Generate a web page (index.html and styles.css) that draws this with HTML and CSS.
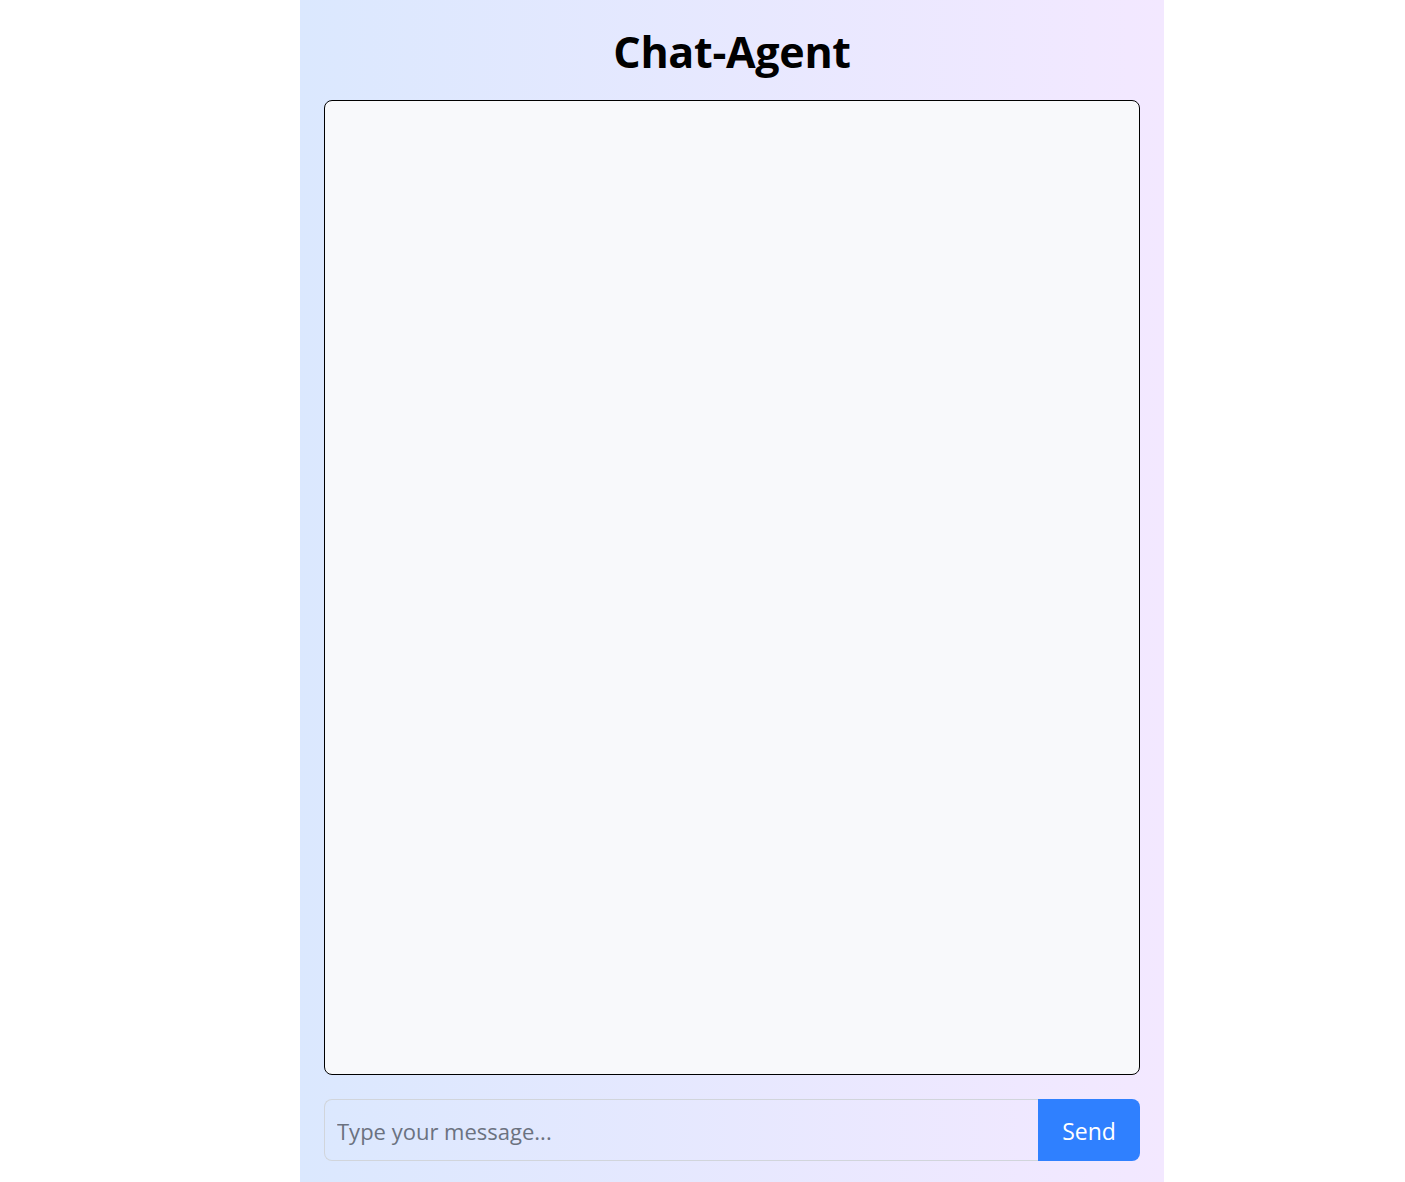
FILE: index.html
```
<!DOCTYPE html>
<html>
<head>
<meta charset="utf-8">
<link rel="stylesheet" href="styles.css">
</head>
<body>
<div class="app">
  <h1 class="title">Chat-Agent</h1>
  <div class="chat-box"></div>
  <form class="input-row">
    <input class="msg-input" type="text" placeholder="Type your message...">
    <button class="send-btn" type="button">Send</button>
  </form>
</div>
</body>
</html>
```
FILE: styles.css
```
html, body {
  margin: 0;
  padding: 0;
  background: #ffffff;
  height: 100%;
}
body {
  font-family: "Open Sans", "Noto Sans", sans-serif;
}
.app {
  box-sizing: border-box;
  margin-left: 300px;
  width: 864px;
  height: 1182px;
  padding: 24px 24px 21px;
  display: flex;
  flex-direction: column;
  background: linear-gradient(to right, #dbe8fe, #f3e8ff);
}
.title {
  margin: 0 0 24px;
  height: 52px;
  line-height: 56px;
  font-size: 43px;
  font-weight: 700;
  text-align: center;
  color: #000;
  letter-spacing: -0.3px;
}
.chat-box {
  flex: 1;
  box-sizing: border-box;
  border: 1px solid #000;
  border-radius: 8px;
  background: #f8f9fb;
}
.input-row {
  margin: 24px 0 0;
  display: flex;
  height: 62px;
}
.msg-input {
  flex: 1;
  box-sizing: border-box;
  height: 62px;
  border: 1px solid #d1d5db;
  border-right: none;
  border-radius: 8px 0 0 8px;
  background: transparent;
  padding: 2px 12px 0;
  font-family: "Open Sans", "Noto Sans", sans-serif;
  font-size: 22px;
  color: #111;
  outline: none;
}
.msg-input::placeholder {
  color: #6b7280;
}
.send-btn {
  width: 102px;
  height: 62px;
  border: none;
  border-radius: 0 8px 8px 0;
  background: #2f80ff;
  color: #fff;
  font-family: "Open Sans", "Noto Sans", sans-serif;
  font-size: 23px;
  padding: 2px 0 0;
}
```
